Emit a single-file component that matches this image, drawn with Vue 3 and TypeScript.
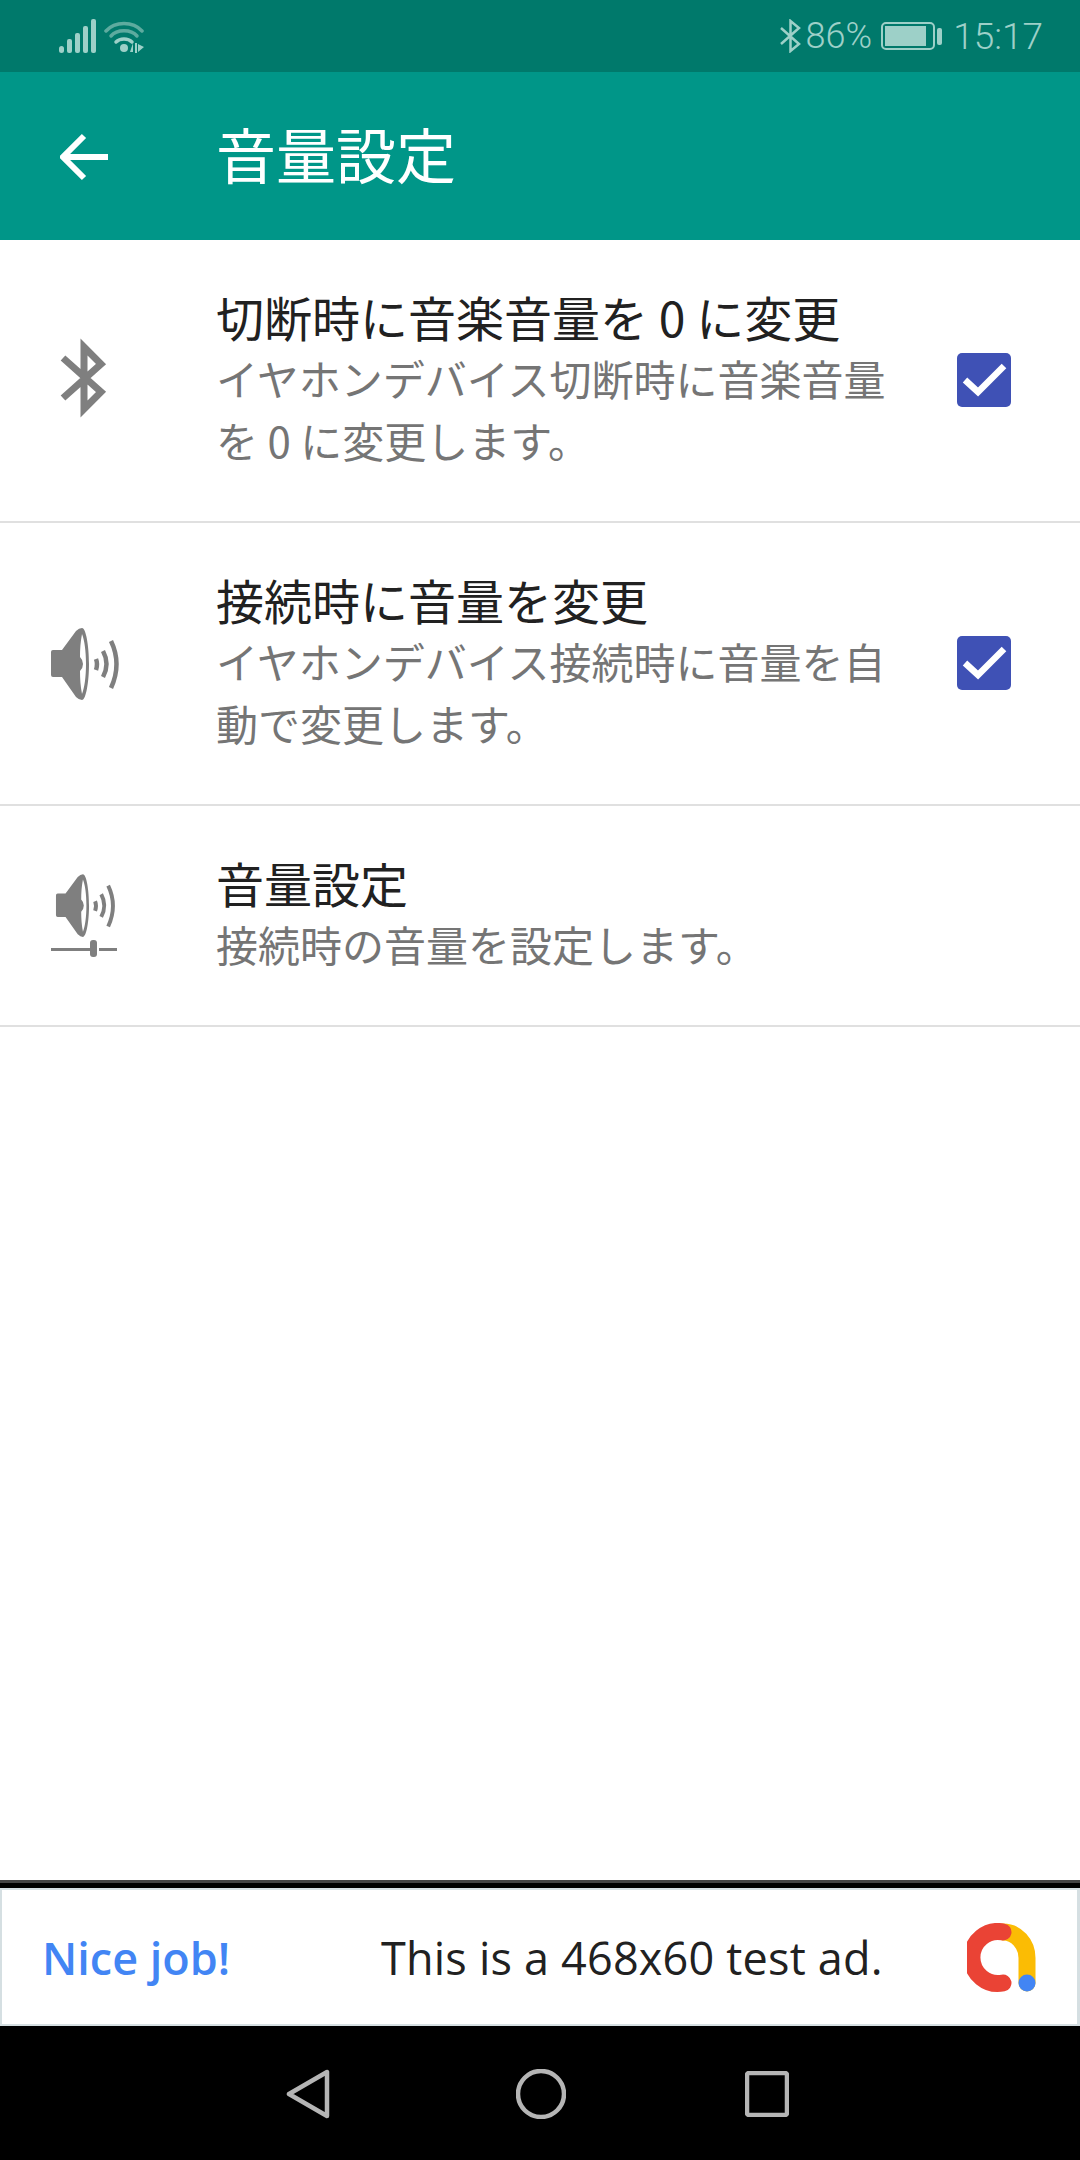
<script setup lang="ts">
interface SettingRow {
  icon: 'bluetooth' | 'speaker' | 'slider'
  title: string
  desc: string
  checked: boolean
}

const rows: SettingRow[] = [
  {
    icon: 'bluetooth',
    title: '切断時に音楽音量を 0 に変更',
    desc: 'イヤホンデバイス切断時に音楽音量を 0 に変更します。',
    checked: true,
  },
  {
    icon: 'speaker',
    title: '接続時に音量を変更',
    desc: 'イヤホンデバイス接続時に音量を自動で変更します。',
    checked: true,
  },
  {
    icon: 'slider',
    title: '音量設定',
    desc: '接続時の音量を設定します。',
    checked: false,
  },
]
</script>

<template>
  <div class="page">
    <div class="status-bar">
      <svg class="signal" width="37" height="34" viewBox="0 0 37 34">
        <g fill="#9dd0c8">
          <rect x="0" y="27" width="5" height="7" rx="2.5" />
          <rect x="8" y="20" width="5" height="14" rx="2" />
          <rect x="16" y="14" width="5" height="20" rx="2" />
          <rect x="24" y="7" width="5" height="27" rx="2" />
          <rect x="32" y="0" width="5" height="34" rx="2" />
        </g>
      </svg>
      <svg class="wifi" width="40" height="34" viewBox="0 0 40 34">
        <g fill="none" stroke-linecap="round">
          <path d="M2 12C11 2 29 2 38 12" stroke="#5dab9f" stroke-width="3.5" />
          <path d="M7 17C13 10 27 10 33 17" stroke="#5dab9f" stroke-width="3.5" />
          <path d="M12 23C16 19 24 19 28 23" stroke="#9dd0c8" stroke-width="3.5" />
        </g>
        <circle cx="20" cy="29" r="4" fill="#9dd0c8" />
        <path d="M26 33h3v-9zM31 24h2v10h-2zM34 25l6 3-6 5z" fill="#9dd0c8" />
      </svg>
      <div class="status-right">
        <svg width="21" height="34" viewBox="0 0 21 34">
          <path d="M1 9L19 25L10.500 32V2L19 9L1 25" fill="none" stroke="#9dd0c8" stroke-width="2.500" />
        </svg>
        <span class="pct">86%</span>
        <svg class="battery" width="61" height="28" viewBox="0 0 61 28">
          <rect x="1" y="1" width="52" height="26" rx="4" fill="none" stroke="#9dd0c8" stroke-width="2" />
          <rect x="4" y="4" width="41" height="20" fill="#9dd0c8" />
          <rect x="56" y="6" width="5" height="17" rx="2" fill="#9dd0c8" />
        </svg>
        <span class="time">15:17</span>
      </div>
    </div>

    <header class="app-bar">
      <svg class="back" width="48" height="48" viewBox="0 0 48 48">
        <path d="M48 24H4M24 3L3 24L24 45" fill="none" stroke="#fff" stroke-width="6" />
      </svg>
      <h1 class="app-title">音量設定</h1>
    </header>

    <section v-for="row in rows" :key="row.title" class="row">
      <div class="row-icon">
        <svg width="120" height="120" viewBox="0 0 120 120">
          <path
            v-if="row.icon === 'bluetooth'"
            d="M43 37L81 71L64 88V26L81 43L43 77"
            fill="none"
            stroke="#7f7f7f"
            stroke-width="7"
          />
          <g v-else-if="row.icon === 'speaker'" transform="translate(0 7)">
            <path d="M33 39H42L56 20Q59 17 62 17C66 17 69 35 69 53C69 71 66 89 62 89Q59 89 56 86L42 66H33Q31 66 31 64V41Q31 39 33 39Z" fill="#7f7f7f" />
            <path d="M62 23C60.500 31 60 38 60 46Q63 49 63 53Q63 57 60 60C60 68 60.500 75 62 83C64.500 77 66 66 66 53C66 40 64.500 29 62 23Z" fill="#fff" />
            <g fill="none" stroke="#7f7f7f" stroke-width="4.500">
              <path d="M76 48Q78 53 76 59" />
              <path d="M83 40Q90 53 83 66" />
              <path d="M91 30Q102 53 91 77" />
            </g>
          </g>
          <g v-else>
            <g transform="translate(9 3.500) scale(.87)">
              <path d="M33 39H42L56 20Q59 17 62 17C66 17 69 35 69 53C69 71 66 89 62 89Q59 89 56 86L42 66H33Q31 66 31 64V41Q31 39 33 39Z" fill="#7f7f7f" />
              <path d="M62 23C60.500 31 60 38 60 46Q63 49 63 53Q63 57 60 60C60 68 60.500 75 62 83C64.500 77 66 66 66 53C66 40 64.500 29 62 23Z" fill="#fff" />
              <g fill="none" stroke="#7f7f7f" stroke-width="4.500">
                <path d="M76 48Q78 53 76 59" />
                <path d="M83 40Q90 53 83 66" />
                <path d="M91 30Q102 53 91 77" />
              </g>
            </g>
            <rect x="31" y="92" width="39" height="3" fill="#7f7f7f" />
            <rect x="79" y="92" width="18" height="3" fill="#7f7f7f" />
            <rect x="70" y="84" width="7" height="17" rx="3" fill="#7f7f7f" />
          </g>
        </svg>
      </div>
      <div class="row-text">
        <div class="row-title">{{ row.title }}</div>
        <div class="row-desc">{{ row.desc }}</div>
      </div>
      <div v-if="row.checked" class="check">
        <svg width="54" height="54" viewBox="0 0 54 54">
          <path d="M8 27L21 39L47 13" fill="none" stroke="#fff" stroke-width="6.500" />
        </svg>
      </div>
    </section>

    <div class="spacer"></div>

    <footer class="bottom">
      <div class="ad">
        <span class="ad-head">Nice job!</span>
        <span class="ad-msg">This is a 468x60 test ad.</span>
        <svg class="ad-logo" width="70" height="70" viewBox="0 0 70 70">
          <path d="M36 9A24 26 0 0 1 60 35V60" fill="none" stroke="#fbbc04" stroke-width="17" stroke-linecap="round" />
          <path d="M36 9A26 26 0 1 0 36 60" fill="none" stroke="#ea4335" stroke-width="17" stroke-linecap="round" />
          <circle cx="60" cy="60" r="8.500" fill="#4285f4" />
        </svg>
      </div>
      <nav class="nav">
        <svg width="44" height="50" viewBox="0 0 44 50">
          <path d="M41 3V47L3 25Z" fill="none" stroke="#b5b5b5" stroke-width="4.500" stroke-linejoin="round" />
        </svg>
        <svg class="nav-home" width="50" height="50" viewBox="0 0 50 50">
          <circle cx="25" cy="25" r="23" fill="none" stroke="#b5b5b5" stroke-width="4.500" />
        </svg>
        <svg class="nav-recent" width="44" height="46" viewBox="0 0 44 46">
          <rect x="2" y="2" width="40" height="42" rx="2" fill="none" stroke="#b5b5b5" stroke-width="4.500" />
        </svg>
      </nav>
    </footer>
  </div>
</template>

<style scoped>
.page {
  display: flex;
  flex-direction: column;
  width: 1080px;
  height: 2160px;
  background: #fff;
  font-family: "Noto Sans CJK JP", "Noto Sans", sans-serif;
}

.status-bar {
  display: flex;
  align-items: center;
  height: 72px;
  padding: 0 37px 0 59px;
  box-sizing: border-box;
  background: #00796b;
  color: #9dd0c8;
  font-family: Roboto, sans-serif;
  font-size: 37px;
  font-weight: 300;
}

.wifi {
  margin-left: 8px;
}

.status-right {
  display: flex;
  align-items: center;
  margin-left: auto;
}

.pct {
  margin-left: 5px;
  font-size: 36px;
}

.battery {
  margin-left: 9px;
}

.time {
  margin-left: 11px;
}

.app-bar {
  display: flex;
  align-items: center;
  height: 168px;
  padding-left: 60px;
  box-sizing: border-box;
  background: #009688;
}

.back {
  margin-top: 1px;
}

.app-title {
  margin: 0 0 8px 108px;
  color: #fff;
  font-size: 60px;
  font-weight: 400;
}

.row {
  display: flex;
  align-items: center;
  border-bottom: 2px solid #e0e0e0;
}

.row-icon {
  display: flex;
  flex: none;
  width: 216px;
  padding-left: 20px;
  box-sizing: border-box;
}

.row-text {
  flex: none;
  width: 710px;
  padding: 45px 0 50px;
}

.row-title {
  color: #212121;
  font-size: 48px;
  line-height: 62px;
}

.row-desc {
  color: #757575;
  font-size: 42px;
  line-height: 62px;
}

.check {
  display: flex;
  flex: none;
  margin: 0 0 2px 31px;
  border-radius: 5px;
  background: #3f51b5;
}

.spacer {
  flex: 1;
}

.bottom {
  border-top: 3px solid #444;
  padding-top: 5px;
  background: #000;
}

.ad {
  display: flex;
  align-items: center;
  height: 138px;
  padding: 0 40px;
  box-sizing: border-box;
  border-style: solid;
  border-color: #d5dfe2;
  border-width: 2px 3px 2px 2px;
  background: #fff;
  font-family: "Open Sans", sans-serif;
  font-size: 45px;
}

.ad-head {
  width: 339px;
  color: #4285f4;
  font-weight: 600;
}

.ad-msg {
  color: #212121;
  letter-spacing: 0.2px;
}

.ad-logo {
  margin: 2px 0 0 auto;
}

.nav {
  display: flex;
  align-items: center;
  height: 134px;
  padding: 2px 0 0 286px;
  gap: 183px;
  box-sizing: border-box;
}

.nav-home {
  margin-left: 3px;
}

.nav-recent {
  margin-left: -4px;
}
</style>
